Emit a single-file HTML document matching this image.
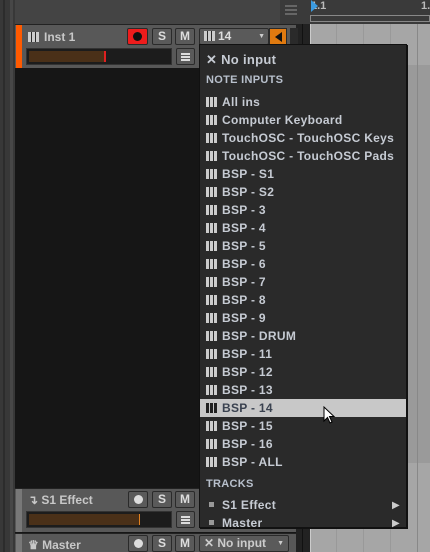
<!DOCTYPE html><html><head><style>
*{margin:0;padding:0;box-sizing:border-box}
body{width:430px;height:552px;overflow:hidden;background:#161616;font-family:"Liberation Sans",sans-serif;position:relative}
.a{position:absolute}
.t{font-weight:bold;font-size:12px;color:#c9ccd2;white-space:nowrap}
.btn{position:absolute;background:#5a5a5a;border:1px solid #2a2a2a;border-radius:2px;color:#ddd;font-weight:bold;font-size:12px;text-align:center;line-height:15px}
.pk{display:inline-block;width:11px;height:10px;vertical-align:-1px;margin-right:5px;background:linear-gradient(90deg,#ccc 0 3px,#555 3px 4px,#ccc 4px 7px,#555 7px 8px,#ccc 8px 11px);border-top:5px solid transparent;background-clip:border-box;position:relative}
.pk::before{content:"";position:absolute;left:2px;top:-5px;width:7px;height:6px;background:linear-gradient(90deg,#222 0 2px,#ccc 2px 3px,#222 3px 5px,transparent 5px 6px,#222 6px 7px)}
.pk{border:0;background:linear-gradient(90deg,#ccc 0 3px,#2a2a2a 3px 4px,#ccc 4px 7px,#2a2a2a 7px 8px,#ccc 8px 11px)}
.pk::before{display:none}
.mi{position:absolute;left:206px;font-weight:bold;font-size:12px;color:#c6cbd3;white-space:nowrap;letter-spacing:0.3px}
</style></head><body>
<div class="a" style="left:0;top:0;width:15px;height:552px;background:#383838"></div>
<div class="a" style="left:3px;top:0;width:2px;height:552px;background:#2c2c2c"></div>
<div class="a" style="left:10px;top:0;width:3px;height:552px;background:#474747"></div>
<div class="a" style="left:15px;top:0;width:265px;height:24px;background:#444"></div>
<div class="a" style="left:280px;top:0;width:23px;height:24px;background:#3a3a3a"></div>
<div class="a" style="left:285px;top:5px;width:12px;height:2px;background:#666;box-shadow:0 4px 0 #666,0 8px 0 #666"></div>
<div class="a" style="left:303px;top:0;width:127px;height:24px;background:#3a3a3a"></div>
<div class="a" style="left:311px;top:0;font-size:11px;color:#bbb;font-weight:bold">1.1</div>
<div class="a" style="left:311px;top:0;width:0;height:0;border-top:6px solid transparent;border-bottom:6px solid transparent;border-left:7px solid #3b9be0"></div>
<div class="a" style="left:421px;top:0;font-size:11px;color:#bbb;font-weight:bold">1.</div>
<div class="a" style="left:310px;top:15px;width:120px;height:7px;border:1px solid #888"></div>
<div class="a" style="left:303px;top:24px;width:127px;height:528px;background:#a6a6a6"></div>
<div class="a" style="left:310px;top:65px;width:120px;height:398px;background:#9a9a9a"></div>
<div class="a" style="left:310px;top:24px;width:1px;height:528px;background:#ccc"></div>
<div class="a" style="left:336px;top:24px;width:1px;height:528px;background:#999"></div>
<div class="a" style="left:363px;top:24px;width:1px;height:528px;background:#999"></div>
<div class="a" style="left:390px;top:24px;width:1px;height:528px;background:#999"></div>
<div class="a" style="left:417px;top:24px;width:1px;height:528px;background:#888"></div>
<div class="a" style="left:296px;top:24px;width:14px;height:528px;background:#222"></div>
<div class="a" style="left:302px;top:24px;width:1px;height:528px;background:#111"></div>
<div class="a" style="left:15px;top:24px;width:281px;height:44px;background:#585858;border-top:1px solid #222"></div>
<div class="a" style="left:16px;top:25px;width:6px;height:43px;background:#ff5a00"></div>
<div class="a t" style="left:28px;top:30px;color:#c8c8c8"><span class="pk"></span>Inst 1</div>
<div class="btn" style="left:127px;top:28px;width:21px;height:17px;background:#ee1c1c"><div style="width:9px;height:9px;border-radius:50%;background:#111;margin:3px auto"></div></div>
<div class="btn" style="left:152px;top:28px;width:20px;height:17px">S</div>
<div class="btn" style="left:175px;top:28px;width:20px;height:17px">M</div>
<div class="btn" style="left:199px;top:28px;width:70px;height:17px;text-align:left;padding-left:4px"><span class="pk" style="margin-right:3px"></span>14<span style="position:absolute;right:3px;font-size:7px;color:#ccc">▼</span></div>
<div class="a" style="left:269px;top:28px;width:18px;height:17px;background:#e07a10;border:1px solid #2a2a2a"><div style="margin:3px 0 0 5px;width:0;height:0;border-top:5px solid transparent;border-bottom:5px solid transparent;border-right:7px solid #111"></div></div>
<div class="a" style="left:290px;top:28px;width:8px;height:40px;background:#2a2a2a"></div>
<div class="a" style="left:26px;top:48px;width:146px;height:17px;background:#1c1c1c;border:1px solid #333"></div>
<div class="a" style="left:29px;top:51px;width:76px;height:11px;background:#4a3018"></div>
<div class="a" style="left:104px;top:51px;width:2px;height:11px;background:#e02020"></div>
<div class="btn" style="left:176px;top:48px;width:19px;height:17px"><div style="width:9px;height:2px;background:#ddd;margin:4px auto 0;box-shadow:0 3px 0 #ddd,0 6px 0 #ddd"></div></div>
<div class="a" style="left:15px;top:488px;width:281px;height:44px;background:#585858;border-top:1px solid #222"></div>
<div class="a" style="left:16px;top:489px;width:6px;height:43px;background:#787878"></div>
<div class="a t" style="left:28px;top:493px;color:#c8c8c8">↴ S1 Effect</div>
<div class="btn" style="left:128px;top:491px;width:20px;height:17px"><div style="width:9px;height:9px;border-radius:50%;background:#ddd;margin:3px auto"></div></div>
<div class="btn" style="left:152px;top:491px;width:20px;height:17px">S</div>
<div class="btn" style="left:175px;top:491px;width:20px;height:17px">M</div>
<div class="a" style="left:26px;top:511px;width:146px;height:17px;background:#1c1c1c;border:1px solid #333"></div>
<div class="a" style="left:29px;top:514px;width:110px;height:11px;background:#4a3018"></div>
<div class="a" style="left:139px;top:514px;width:1px;height:11px;background:#e08020"></div>
<div class="btn" style="left:176px;top:511px;width:19px;height:17px"><div style="width:9px;height:2px;background:#ddd;margin:4px auto 0;box-shadow:0 3px 0 #ddd,0 6px 0 #ddd"></div></div>
<div class="a" style="left:15px;top:533px;width:281px;height:19px;background:#585858;border-top:1px solid #222"></div>
<div class="a" style="left:16px;top:534px;width:6px;height:18px;background:#787878"></div>
<div class="a t" style="left:28px;top:538px;color:#c8c8c8">♛ Master</div>
<div class="btn" style="left:128px;top:535px;width:20px;height:17px"><div style="width:9px;height:9px;border-radius:50%;background:#ddd;margin:3px auto"></div></div>
<div class="btn" style="left:152px;top:535px;width:20px;height:17px">S</div>
<div class="btn" style="left:175px;top:535px;width:20px;height:17px">M</div>
<div class="btn" style="left:199px;top:535px;width:90px;height:17px;text-align:left;padding-left:4px;color:#ccc">✕ No input<span style="position:absolute;right:4px;font-size:7px">▼</span></div>
<div class="a" style="left:199px;top:44px;width:208px;height:484px;background:#2a2a2a;border:1px solid #111;box-shadow:1px 1px 0 #111"></div>
<div class="mi" style="top:52px;font-size:13px">✕ No input</div>
<div class="mi" style="top:74px;font-size:11px;color:#b8c0cc">NOTE INPUTS</div>
<div class="a" style="left:200px;top:399px;width:206px;height:18px;background:#c8c8c8"></div>
<div class="mi" style="top:95px"><span class="pk"></span>All ins</div>
<div class="mi" style="top:113px"><span class="pk"></span>Computer Keyboard</div>
<div class="mi" style="top:131px"><span class="pk"></span>TouchOSC - TouchOSC Keys</div>
<div class="mi" style="top:149px"><span class="pk"></span>TouchOSC - TouchOSC Pads</div>
<div class="mi" style="top:167px"><span class="pk"></span>BSP - S1</div>
<div class="mi" style="top:185px"><span class="pk"></span>BSP - S2</div>
<div class="mi" style="top:203px"><span class="pk"></span>BSP - 3</div>
<div class="mi" style="top:221px"><span class="pk"></span>BSP - 4</div>
<div class="mi" style="top:239px"><span class="pk"></span>BSP - 5</div>
<div class="mi" style="top:257px"><span class="pk"></span>BSP - 6</div>
<div class="mi" style="top:275px"><span class="pk"></span>BSP - 7</div>
<div class="mi" style="top:293px"><span class="pk"></span>BSP - 8</div>
<div class="mi" style="top:311px"><span class="pk"></span>BSP - 9</div>
<div class="mi" style="top:329px"><span class="pk"></span>BSP - DRUM</div>
<div class="mi" style="top:347px"><span class="pk"></span>BSP - 11</div>
<div class="mi" style="top:365px"><span class="pk"></span>BSP - 12</div>
<div class="mi" style="top:383px"><span class="pk"></span>BSP - 13</div>
<div class="mi" style="top:401px;color:#3a4250"><span class="pk" style="background:linear-gradient(90deg,#222 0 3px,#c8c8c8 3px 4px,#222 4px 7px,#c8c8c8 7px 8px,#222 8px 11px)"></span>BSP - 14</div>
<div class="mi" style="top:419px"><span class="pk"></span>BSP - 15</div>
<div class="mi" style="top:437px"><span class="pk"></span>BSP - 16</div>
<div class="mi" style="top:455px"><span class="pk"></span>BSP - ALL</div>
<div class="mi" style="top:478px;font-size:11px;color:#b8c0cc">TRACKS</div>
<div class="mi" style="top:498px"><span style="display:inline-block;width:5px;height:5px;background:#999;margin:0 8px 2px 3px"></span>S1 Effect</div>
<div class="mi" style="top:516px"><span style="display:inline-block;width:5px;height:5px;background:#999;margin:0 8px 2px 3px"></span>Master</div>
<div class="a" style="left:392px;top:500px;font-size:10px;color:#ccc">▶</div>
<div class="a" style="left:392px;top:518px;font-size:10px;color:#ccc">▶</div>
<svg class="a" style="left:323px;top:406px" width="14" height="20"><path d="M1 1 L1 15 L4.5 11.5 L7 17 L9 16 L6.5 10.5 L11 10.5 Z" fill="#fff" stroke="#000" stroke-width="1"/></svg>
</body></html>
